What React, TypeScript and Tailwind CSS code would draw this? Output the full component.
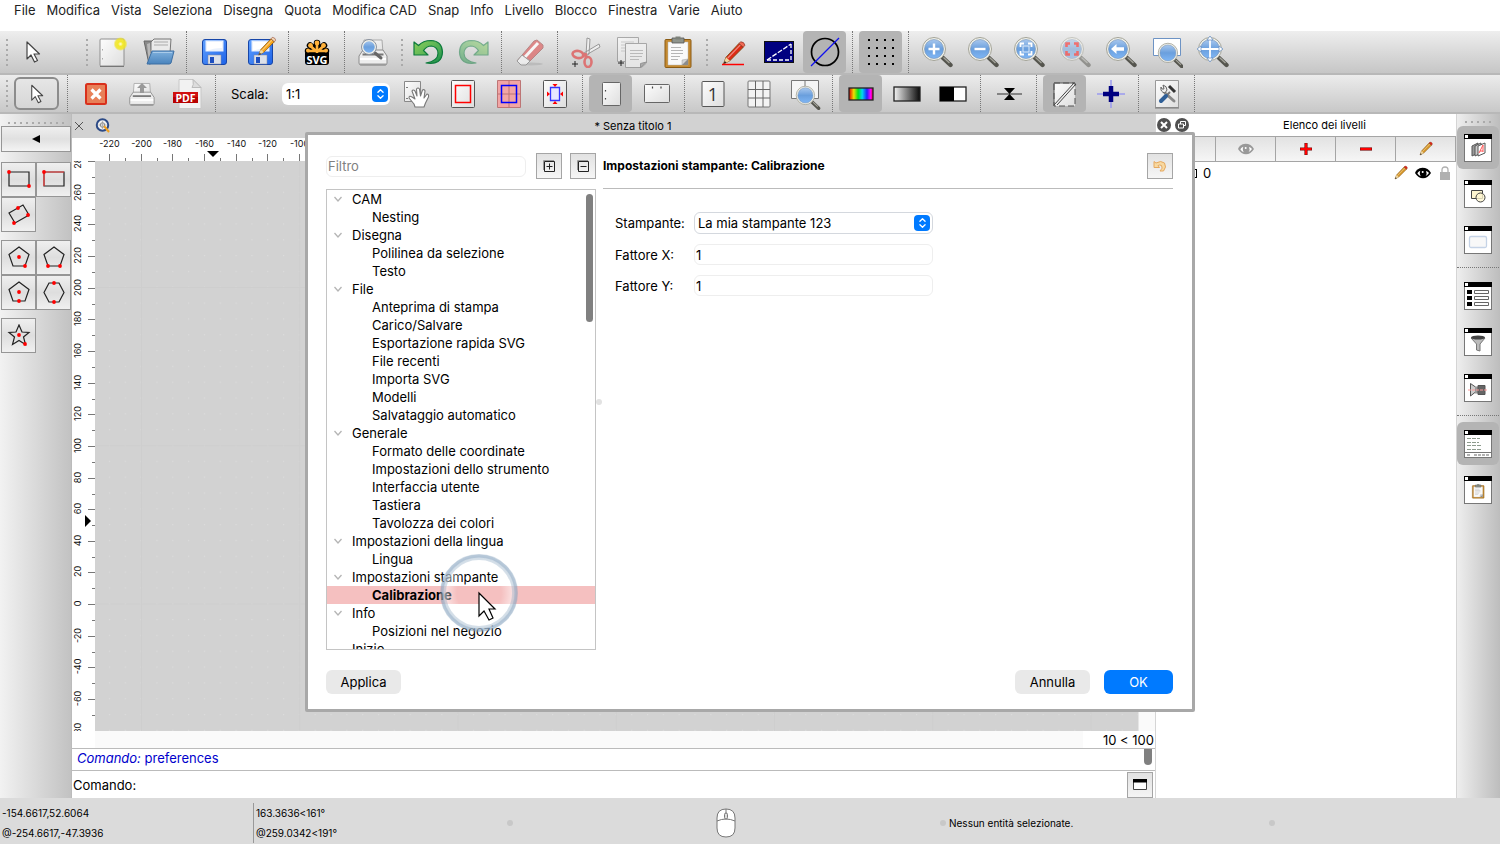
import React from 'react'
import type { ReactNode } from 'react'

const menus = ['File', 'Modifica', 'Vista', 'Seleziona', 'Disegna', 'Quota', 'Modifica CAD', 'Snap', 'Info', 'Livello', 'Blocco', 'Finestra', 'Varie', 'Aiuto']

const tree = [
  { name: 'CAM', items: ['Nesting'] },
  { name: 'Disegna', items: ['Polilinea da selezione', 'Testo'] },
  { name: 'File', items: ['Anteprima di stampa', 'Carico/Salvare', 'Esportazione rapida SVG', 'File recenti', 'Importa SVG', 'Modelli', 'Salvataggio automatico'] },
  { name: 'Generale', items: ['Formato delle coordinate', 'Impostazioni dello strumento', 'Interfaccia utente', 'Tastiera', 'Tavolozza dei colori'] },
  { name: 'Impostazioni della lingua', items: ['Lingua'] },
  { name: 'Impostazioni stampante', items: ['Calibrazione'] },
  { name: 'Info', items: ['Posizioni nel negozio'] },
  { name: 'Inizio', items: [] },
]

/* ---------- icons ---------- */

function Icon({ children, className = 'w-8 h-8', box = '0 0 32 32' }: { children: ReactNode; className?: string; box?: string }) {
  return (
    <svg viewBox={box} className={`${className} shrink-0`} fill="none" aria-hidden="true">
      {children}
    </svg>
  )
}

function Defs() {
  return (
    <svg width="0" height="0" className="absolute" aria-hidden="true">
      <defs>
        <linearGradient id="paper" x1="0" y1="0" x2="1" y2="1">
          <stop offset="0" stopColor="#fdfdfd" />
          <stop offset="1" stopColor="#dedede" />
        </linearGradient>
        <linearGradient id="lens" x1="0" y1="0" x2="0" y2="1">
          <stop offset="0" stopColor="#a9c8ee" />
          <stop offset="0.5" stopColor="#6a9fdd" />
          <stop offset="1" stopColor="#7fb6f5" />
        </linearGradient>
        <linearGradient id="floppy" x1="0" y1="0" x2="1" y2="1">
          <stop offset="0" stopColor="#5fa0ff" />
          <stop offset="1" stopColor="#1d63e8" />
        </linearGradient>
        <linearGradient id="folder" x1="0" y1="0" x2="0" y2="1">
          <stop offset="0" stopColor="#7fb0dd" />
          <stop offset="1" stopColor="#4a84bd" />
        </linearGradient>
        <linearGradient id="green" x1="0" y1="0" x2="1" y2="1">
          <stop offset="0" stopColor="#8ccf5a" />
          <stop offset="0.6" stopColor="#4fae55" />
          <stop offset="1" stopColor="#128a48" />
        </linearGradient>
        <linearGradient id="rainbow">
          <stop offset="0" stopColor="#e00000" />
          <stop offset="0.2" stopColor="#f0e000" />
          <stop offset="0.38" stopColor="#00e020" />
          <stop offset="0.55" stopColor="#00d8f0" />
          <stop offset="0.75" stopColor="#2020ff" />
          <stop offset="0.9" stopColor="#ff00ff" />
          <stop offset="1" stopColor="#f00040" />
        </linearGradient>
        <linearGradient id="mono">
          <stop offset="0" stopColor="#f4f4f4" />
          <stop offset="1" stopColor="#0a0a0a" />
        </linearGradient>
        <radialGradient id="glow">
          <stop offset="0" stopColor="#fffde0" />
          <stop offset="0.35" stopColor="#f4ea2a" />
          <stop offset="0.75" stopColor="#f0e420" stopOpacity="0.8" />
          <stop offset="1" stopColor="#f0e420" stopOpacity="0" />
        </radialGradient>
      </defs>
    </svg>
  )
}

const Arrow = () => (
  <path d="M10 6v17l4-4 3.500 7 3-1.500L17 18h5.500z" fill="#fff" stroke="#444" strokeWidth="1.200" strokeLinejoin="round" />
)

function Lens({ children, faded }: { children?: ReactNode; faded?: boolean }) {
  return (
    <g opacity={faded ? 0.5 : 1}>
      <path d="M21 21l8.500 8" stroke="#55554e" strokeWidth="4.400" strokeLinecap="round" />
      <path d="M22.500 21.500l6 5.600" stroke="#a5a59c" strokeWidth="1.300" />
      <circle cx="13" cy="13" r="11.500" fill="#f2f2ea" stroke="#a3a398" />
      <circle cx="13" cy="13" r="9.500" fill="url(#lens)" stroke="#7490b4" strokeWidth="0.600" />
      {children}
    </g>
  )
}

const Printer = () => (
  <>
    <path d="M7 4h18l1 13H6z" fill="url(#paper)" stroke="#aaa" />
    <path d="M6 14h20l4 6v7q0 2-2 2H4q-2 0-2-2v-7z" fill="#ededed" stroke="#8c8c8c" />
    <path d="M5.500 18.500h21" stroke="#777" strokeWidth="2" />
    <path d="M3 23h26" stroke="#fff" strokeWidth="2" />
    <path d="M3 28.500h26" stroke="#9b9b9b" strokeWidth="2" />
  </>
)

const Floppy = () => (
  <>
    <rect x="3.500" y="3.500" width="24" height="25" rx="2.500" fill="url(#floppy)" stroke="#1746a8" />
    <path d="M6.500 4.500h18v11h-18z" fill="#eaf1fc" />
    <path d="M8 6h15v6q-9 0-15 3z" fill="#fff" />
    <path d="M9 19h13v9H9z" fill="#dce1ea" stroke="#889" strokeWidth="0.500" />
    <path d="M11 21h4v6h-4z" fill="#1d4fc0" />
  </>
)

function Pencil({ wood = '#d99a2b', tip = '#e02818' }: { wood?: string; tip?: string }) {
  return (
    <g strokeLinejoin="round">
      <path d="M4 28l3-8L22 4l5 4.500L11.500 24z" fill={wood} stroke="#7a4a10" strokeWidth="1" />
      <path d="M22 4l2-2q4 0 5 4l-2 2.500z" fill={tip} stroke="#7a2010" strokeWidth="0.700" />
      <path d="M4 28l3-8 4.500 4z" fill="#efd7a2" />
      <path d="M4 28l1.500-3.500 2 1.800z" fill="#222" />
      <path d="M9 21L23.500 6" stroke="#fff" strokeOpacity="0.450" strokeWidth="1.500" />
    </g>
  )
}

const Clipboard = () => (
  <>
    <rect x="3" y="3.500" width="26" height="28" rx="1" fill="#c58a30" stroke="#8a5b14" />
    <path d="M6 6h20v23H6z" fill="#fafafa" stroke="#bbb" strokeWidth="0.500" />
    <path d="M10 2h12v5H10z" fill="#8f948c" stroke="#555" strokeWidth="0.800" />
    <path d="M13.500 0.500h5v3h-5z" fill="#7c8078" />
    <path d="M9 11.500h10M9 14.500h12M9 17.500h12M9 20.500h9M9 23.500h7" stroke="#b5b5b5" />
    <path d="M26 23l-6 6h6z" fill="#8c8c8c" />
    <path d="M20 29v-5l6-1z" fill="#d5d5d5" stroke="#888" strokeWidth="0.400" />
  </>
)

const Undo = () => (
  <path d="M2 6v13h14l-4.500-4.500q3-4.500 8-4.500 6.500 1 6.500 7.500 0 7.500-12 9.500 16 2.500 16.500-11Q30 5 19 4.500 11 4.500 6.500 9.500z" fill="url(#green)" stroke="#0d7a3c" strokeWidth="1.200" strokeLinejoin="round" />
)

const Page = () => <rect x="4.500" y="2.500" width="23" height="27" rx="1" fill="url(#paper)" stroke="#555" />

const Eye = ({ color }: { color: string }) => (
  <>
    <path d="M0 10q2-7 11-8 9 0 13 8-5 8-12 8T0 10z" fill={color} />
    <path d="M3.500 10.500Q5 7.500 8 6.500q-2 5 1 8.500-3.500-1-5.500-4.500zM16.500 7q3 1 4.500 3-2 3-5 4.500 2.500-3.500 0.500-7.500z" fill="#fff" />
    <circle cx="11.500" cy="8.500" r="1.500" fill="#fff" />
  </>
)

const Frame = ({ children }: { children: ReactNode }) => (
  <Icon className="w-7 h-7" box="0 0 28 28">
    <rect x="0.500" y="0.500" width="27" height="27" fill="#fff" stroke="#777" />
    <path d="M0 0h28v5H0z" fill="#000" />
    <path d="M1 1h3v3H1z" fill="#fff" />
    {children}
  </Icon>
)

/* ---------- toolbar parts ---------- */

function Tool({ label, active, children }: { label: string; active?: boolean; children: ReactNode }) {
  return (
    <button type="button" aria-label={label} className={`flex items-center justify-center w-[43px] h-full shrink-0 rounded ${active ? 'bg-[#b4b4b4]' : ''}`}>
      {children}
    </button>
  )
}

const Sep = () => (
  <div className="flex justify-center w-[7px] h-full shrink-0">
    <div className="h-full border-l border-dotted border-[#777]" />
  </div>
)

const Handle = ({ className = '' }: { className?: string }) => (
  <div className={`flex flex-col justify-center items-end gap-[3px] w-[6px] h-full shrink-0 ${className}`}>
    {[0, 1, 2, 3, 4, 5].map((i) => (
      <div key={i} className="w-[2px] h-[2px] bg-[#aaa]" />
    ))}
  </div>
)

const Chip = ({ className }: { className: string }) => (
  <span className={`absolute flex items-center justify-center rounded bg-[#007aff] pointer-events-none ${className}`}>
    <svg viewBox="0 0 10 14" className="w-[9px] h-[12px]" fill="none" stroke="#fff" strokeWidth="1.500" strokeLinecap="round" strokeLinejoin="round" aria-hidden="true">
      <path d="M2 5l3-3 3 3M2 9l3 3 3-3" />
    </svg>
  </span>
)

function MainToolbar() {
  return (
    <div className="flex items-center gap-[3px] h-11 pl-[2px] shrink-0 overflow-hidden bg-linear-to-b from-[#eeeeee] to-[#c6c6c6] border-b-2 border-[#b8b8b8]">
      <Handle />
      <Tool label="Seleziona"><Icon><Arrow /></Icon></Tool>
      <Handle className="ml-[25px]" />
      <Tool label="Nuovo">
        <Icon>
          <rect x="3" y="3" width="24" height="27" rx="1" fill="url(#paper)" stroke="#909090" />
          <path d="M3 30.500h24" stroke="#777" />
          <path d="M5.500 13v1.500M5.500 22v1.500" stroke="#aaa" />
          <circle cx="23.500" cy="8" r="7" fill="url(#glow)" />
        </Icon>
      </Tool>
      <Tool label="Apri">
        <Icon>
          <path d="M1 5h9l1 2v20l-5 1z" fill="#8a8a8a" stroke="#666" />
          <path d="M4 8l3-1 2 19-3 1z" fill="#b9b9b9" />
          <path d="M8 6l3-3h17l-1 14H8z" fill="#eaeaea" stroke="#777" />
          <path d="M11 6h14M11 9h14" stroke="#aaa" />
          <path d="M9 15h22l-3 12q-1 1-2 1H4z" fill="url(#folder)" stroke="#3c6ea3" strokeLinejoin="round" />
          <path d="M10 16.500h19" stroke="#a9cbea" />
        </Icon>
      </Tool>
      <Sep />
      <Tool label="Salva"><Icon><Floppy /></Icon></Tool>
      <Tool label="Salva con nome">
        <Icon>
          <Floppy />
          <g transform="translate(11 0) scale(0.680)"><Pencil wood="#f6a417" tip="#f3d9b5" /></g>
        </Icon>
      </Tool>
      <Sep />
      <Tool label="Esporta SVG">
        <Icon>
          <g stroke="#000" strokeWidth="6.500" strokeLinecap="round"><path d="M16 16V7M16 16L9 9.500M16 16l7-6.500M16 15H7M16 15h9" /></g>
          <g stroke="#ffb13b" strokeWidth="2.600" strokeLinecap="round"><path d="M16 16V7M16 16L9 9.500M16 16l7-6.500M16 15H7M16 15h9" /></g>
          <g fill="#ffb13b"><circle cx="16" cy="7" r="2.400" /><circle cx="9.500" cy="9.500" r="2.400" /><circle cx="22.500" cy="9.500" r="2.400" /><circle cx="7" cy="14.500" r="2" /><circle cx="25" cy="14.500" r="2" /></g>
          <path d="M4 17h24v9q0 3-3 3H7q-3 0-3-3z" fill="#000" />
          <text x="16" y="27.500" textAnchor="middle" fontFamily="Open Sans, sans-serif" fontSize="11" fontWeight="700" fill="#fff">SVG</text>
        </Icon>
      </Tool>
      <Sep />
      <Tool label="Anteprima di stampa">
        <Icon>
          <Printer />
          <path d="M18 17l6 5" stroke="#666" strokeWidth="3" strokeLinecap="round" />
          <circle cx="12" cy="11" r="6.500" fill="url(#lens)" stroke="#efefe8" strokeWidth="1.500" />
          <circle cx="12" cy="11" r="7.500" stroke="#8a93a0" />
        </Icon>
      </Tool>
      <Handle />
      <Tool label="Annulla"><Icon><Undo /></Icon></Tool>
      <Tool label="Ripeti"><Icon><g transform="translate(32 0) scale(-1 1)" opacity="0.500"><Undo /></g></Icon></Tool>
      <Sep />
      <Tool label="Elimina">
        <Icon>
          <ellipse cx="17" cy="28" rx="12" ry="1.500" fill="#bbb" />
          <g opacity="0.750" strokeLinejoin="round">
            <path d="M3 25L20 5l3-1 6 5v3L13 28H8z" fill="#dd6a6a" stroke="#aa6a6a" />
            <path d="M11 21L24 7" stroke="#fff" strokeWidth="3" />
            <path d="M3 25l5-6 8 6-4 4H7z" fill="#f5f5f5" stroke="#888" />
          </g>
        </Icon>
      </Tool>
      <Sep />
      <Tool label="Taglia">
        <Icon>
          <path d="M17 2l3 1-1 15-3 2zM29 8l1 3-14 8-2-2z" fill="#eee" stroke="#999" />
          <g stroke="#dc7474" strokeWidth="2.600">
            <ellipse cx="8" cy="18.500" rx="5.500" ry="3.500" transform="rotate(10 8 18.500)" />
            <ellipse cx="18" cy="26" rx="3.500" ry="5" />
            <path d="M12 20l5-2M15 17l1 5" />
          </g>
          <path d="M5 25v6M2 28h6" stroke="#222" />
        </Icon>
      </Tool>
      <Tool label="Copia">
        <Icon>
          <g opacity="0.650">
            <path d="M1.500 1.500h21v24h-21z" fill="url(#paper)" stroke="#888" />
            <path d="M5 6h13M5 9h13M5 12h10M5 15h5" stroke="#bbb" />
            <path d="M9.500 7.500h21V27l-5 4.500h-16z" fill="#f4f4f4" stroke="#888" />
            <path d="M14 14.500h13M14 17.500h13M14 20.500h12M14 23.500h9" stroke="#aaa" />
            <path d="M30.500 26l-6 5.500v-4z" fill="#999" stroke="#777" />
          </g>
          <path d="M5 24v6M2 27h6" stroke="#222" />
        </Icon>
      </Tool>
      <Tool label="Incolla"><Icon><Clipboard /></Icon></Tool>
      <Handle />
      <Tool label="Penna">
        <Icon>
          <g transform="translate(3 4) scale(0.860)"><Pencil wood="#dd2a14" tip="#f06a55" /></g>
          <path d="M5 28.500h22" stroke="#f00" strokeWidth="1.500" />
        </Icon>
      </Tool>
      <Tool label="Misura">
        <Icon>
          <rect x="1.500" y="5.500" width="29" height="21" fill="#000080" stroke="#111" />
          <path d="M4 24L28 8" stroke="#fff" strokeWidth="1.300" strokeDasharray="5 1.500" />
          <path d="M28 8v16H4" stroke="#fff" strokeWidth="1.300" strokeDasharray="4 2" />
        </Icon>
      </Tool>
      <Tool label="Modalità bozza" active>
        <Icon>
          <circle cx="16" cy="16" r="13.500" stroke="#000" strokeWidth="1.700" />
          <path d="M2 30L30 2" stroke="#1010f0" strokeWidth="1.300" />
        </Icon>
      </Tool>
      <Sep />
      <Tool label="Griglia" active>
        <Icon>
          {[4, 12, 20, 28].map((y) => <path key={y} d={`M3 ${y}h2M11 ${y}h2M19 ${y}h2M27 ${y}h2`} stroke="#000" strokeWidth="2" />)}
        </Icon>
      </Tool>
      <Sep />
      <Tool label="Zoom avanti"><Icon><Lens><path d="M13 7.500v11M7.500 13h11" stroke="#fff" strokeWidth="2.400" /></Lens></Icon></Tool>
      <Tool label="Zoom indietro"><Icon><Lens><path d="M7.500 13h11" stroke="#fff" strokeWidth="2.400" /></Lens></Icon></Tool>
      <Tool label="Zoom automatico"><Icon><Lens><path d="M7.500 11V7.500H11M15 7.500h3.500V11M18.500 15v3.500H15M11 18.500H7.500V15" stroke="#fff" strokeWidth="1.800" /><rect x="10" y="10" width="6" height="6" stroke="#dceafa" /></Lens></Icon></Tool>
      <Tool label="Zoom selezione"><Icon><Lens faded><path d="M7.500 11V7.500H11M15 7.500h3.500V11M18.500 15v3.500H15M11 18.500H7.500V15" stroke="#f00" strokeWidth="2.600" /></Lens></Icon></Tool>
      <Tool label="Zoom precedente"><Icon><Lens><path d="M6 13l5.500-5v3.200H19v3.600h-7.500V18z" fill="#fff" /></Lens></Icon></Tool>
      <Tool label="Zoom finestra">
        <Icon>
          <path d="M2.500 2.500h27v17h-27z" fill="#fff" stroke="#6d93c4" />
          <g transform="translate(6 6) scale(0.840)"><Lens /></g>
        </Icon>
      </Tool>
      <Tool label="Sposta vista">
        <Icon>
          <Lens>
            <path d="M13 2v22M2 13h22" stroke="#fff" strokeWidth="1.800" />
            <path d="M13 0l3 4h-6zM13 26l3-4h-6zM0 13l4-3v6zM26 13l-4-3v6z" fill="#fff" stroke="#6d93c4" strokeWidth="0.800" />
          </Lens>
        </Icon>
      </Tool>
    </div>
  )
}

function PrintToolbar() {
  return (
    <div className="flex items-center gap-[3px] h-[39px] pl-[2px] shrink-0 overflow-hidden bg-linear-to-b from-[#ececec] to-[#c8c8c8] border-b-2 border-[#b8b8b8]">
      <Handle />
      <button type="button" aria-label="Seleziona" className="flex items-center justify-center w-[45px] h-[33px] ml-[3px] mr-[2px] shrink-0 rounded-md border-2 border-[#8c8c8c] bg-linear-to-b from-[#e6e6e6] to-[#d6d6d6]">
        <Icon className="w-7 h-7"><Arrow /></Icon>
      </button>
      <Sep />
      <Tool label="Chiudi">
        <Icon>
          <rect x="6" y="6" width="20" height="20" rx="1.500" fill="#e88058" stroke="#d9301c" strokeWidth="2" />
          <path d="M11.500 11.500l9 9M20.500 11.500l-9 9" stroke="#fff" strokeWidth="3.200" />
        </Icon>
      </Tool>
      <Tool label="Stampa">
        <Icon>
          <g transform="translate(2 2) scale(0.870)"><Printer /></g>
          <path d="M16 5l5 5h-3v5h-4v-5h-3z" fill="#999" />
        </Icon>
      </Tool>
      <Tool label="Esporta PDF">
        <Icon>
          <path d="M7 1.500h14l8 8v21H7z" fill="#f2f2f2" stroke="#c8c8c8" />
          <path d="M21 1.500q1 6-1 8h9z" fill="#ddd" stroke="#bbb" />
          <path d="M1 14h25v11H1z" fill="#b80000" />
          <path d="M1 14h25v5H1z" fill="#d01010" />
          <text x="13.500" y="23.500" textAnchor="middle" fontFamily="Open Sans, sans-serif" fontSize="10.500" fontWeight="700" fill="#fff">PDF</text>
        </Icon>
      </Tool>
      <Sep />
      <label htmlFor="scale" className="ml-[9px] w-[48px] shrink-0">Scala:</label>
      <div className="relative w-[108px] mr-[2px] shrink-0">
        <select id="scale" className="block w-full h-[22px] pl-1 rounded-md bg-white appearance-none outline-none">
          <option>1:1</option>
        </select>
        <Chip className="right-[2px] top-[3px] w-4 h-4" />
      </div>
      <Tool label="Sposta pagina">
        <Icon>
          <path d="M3.500 3.500h16v20h-16z" fill="url(#paper)" stroke="#888" />
          <path d="M6 9v1M6 20v1" stroke="#555" strokeWidth="1.500" />
          <path d="M14 29l-1-3-5-6q0-3 3-1l3 2-3-8q1-2 3 0l2 5-0.500-7q1.500-2 3 0l1 7 2-6q2-1 2.500 1l-1 7 3-4q2 0 1.500 3l-3 6-1.500 4z" fill="#fff" stroke="#777" strokeWidth="1.100" strokeLinejoin="round" />
        </Icon>
      </Tool>
      <Tool label="Bordi pagina"><Icon><Page /><path d="M8.500 7.500h15v17h-15z" stroke="#f00" strokeWidth="1.500" /></Icon></Tool>
      <Tool label="Pagine multiple">
        <Icon>
          <path d="M4.500 2.500h23v27h-23z" fill="#f2a5a5" stroke="#bd7575" />
          <path d="M16 2v28M4 16h24" stroke="#bd7575" />
          <path d="M8.500 7.500h15v17h-15z" stroke="#00f" strokeWidth="1.500" />
        </Icon>
      </Tool>
      <Tool label="Adatta alla pagina">
        <Icon>
          <Page />
          <path d="M11.500 9.500h9v13h-9z" fill="#e6e6ff" stroke="#33f" strokeWidth="1.300" />
          <path d="M16 9l-2.500-3h5zM16 23l-2.500 3h5zM11 16l-3-2.500v5zM21 16l3-2.500v5z" fill="#f00" />
        </Icon>
      </Tool>
      <Sep />
      <Tool label="Verticale" active>
        <Icon><rect x="7.500" y="4.500" width="18" height="23" rx="1" fill="url(#paper)" stroke="#666" /><path d="M10.500 12v1.500M10.500 20v1.500" stroke="#444" strokeWidth="1.200" /></Icon>
      </Tool>
      <Tool label="Orizzontale">
        <Icon><rect x="3.500" y="6.500" width="25" height="18" rx="1" fill="url(#paper)" stroke="#666" /><path d="M11.500 8.500v2M20 8.500v2" stroke="#444" strokeWidth="1.200" /></Icon>
      </Tool>
      <Sep />
      <Tool label="Pagina singola">
        <Icon>
          <rect x="5" y="3.500" width="22" height="25" rx="1" fill="url(#paper)" stroke="#555" />
          <text x="16" y="23" textAnchor="middle" fontFamily="Open Sans, sans-serif" fontSize="18" fill="#333">1</text>
        </Icon>
      </Tool>
      <Tool label="Più pagine">
        <Icon>
          <rect x="5" y="3" width="22" height="26" rx="1" fill="#f3f3f3" stroke="#777" />
          <path d="M12.500 3v26M20 3v26M5 11.500h22M5 20h22" stroke="#666" />
        </Icon>
      </Tool>
      <Tool label="Zoom pagina">
        <Icon>
          <path d="M2.500 2.500h27v18h-27zM16 2v18" fill="#f5f5f5" stroke="#777" />
          <g transform="translate(6 7) scale(0.800)"><Lens /></g>
        </Icon>
      </Tool>
      <Sep />
      <Tool label="Colore" active><Icon><rect x="4" y="10" width="24" height="12" fill="url(#rainbow)" stroke="#222" strokeWidth="1.300" /></Icon></Tool>
      <Tool label="Scala di grigi"><Icon><rect x="3" y="9" width="26" height="14" fill="url(#mono)" stroke="#222" strokeWidth="1.300" /></Icon></Tool>
      <Tool label="Bianco e nero"><Icon><rect x="3" y="9" width="26" height="14" fill="#fff" stroke="#222" strokeWidth="1.300" /><path d="M3 9h14v14H3z" fill="#000" /></Icon></Tool>
      <Sep />
      <Tool label="Spessore linea"><Icon><path d="M4 16h25" stroke="#666" strokeWidth="1.500" /><path d="M11 10h11l-5.500 6zM11 22h11l-5.500-6z" fill="#000" /></Icon></Tool>
      <Sep />
      <Tool label="Linee tratteggiate" active>
        <Icon>
          <rect x="5" y="5" width="21" height="23" fill="url(#paper)" stroke="#555" strokeDasharray="6 3" />
          <path d="M26 5H5v23" stroke="#555" />
          <path d="M5 27L25 5M8 27L27 6" stroke="#444" />
        </Icon>
      </Tool>
      <Tool label="Origine"><Icon><path d="M16 2v28M2 16h28" stroke="#9a9af0" strokeWidth="1.500" /><path d="M16 8v16M8 16h16" stroke="#000080" strokeWidth="4.500" /></Icon></Tool>
      <Sep />
      <Tool label="Preferenze">
        <Icon>
          <path d="M4.500 2.500h23v27h-23z" fill="url(#paper)" stroke="#999" />
          <path d="M4 30h24" stroke="#777" />
          <path d="M14 15l9 8" stroke="#888" strokeWidth="3" strokeLinecap="round" />
          <path d="M19 14l-4 4" stroke="#777" strokeWidth="2" />
          <path d="M15 18l-5 5" stroke="#2f5f97" strokeWidth="4" strokeLinecap="round" />
          <path d="M18 8l6 6" stroke="#333" strokeWidth="3" />
          <path d="M10 9q-1 5 4 6l2-3q0-4-4-5l1 4-2 0z" fill="#eee" stroke="#666" />
        </Icon>
      </Tool>
      <Sep />
    </div>
  )
}

/* ---------- left palette ---------- */

const Dots = ({ at }: { at: number[][] }) => <>{at.map(([x, y]) => <circle key={`${x}-${y}`} cx={x} cy={y} r="1.900" fill="#f00" />)}</>

function Shape({ label, d, at, red }: { label: string; d: string; at: number[][]; red?: string }) {
  return (
    <button type="button" aria-label={label} className="flex items-center justify-center w-[35px] h-[35px] border border-[#969696] bg-linear-to-b from-[#efefef] via-[#dedede] to-[#f0f0f0]">
      <Icon className="w-6 h-6" box="0 0 24 24">
        <path d={d} stroke="#222" strokeWidth="1.200" />
        {red && <path d={red} stroke="#f44" strokeWidth="1.200" />}
        <Dots at={at} />
      </Icon>
    </button>
  )
}

const pentagon = 'M12 1l10 7.500-4 11.500H6L2 8.500z'

function LeftPalette() {
  return (
    <div className="flex flex-col w-[72px] shrink-0 pl-px pt-2 bg-linear-to-r from-[#f2f2f2] to-[#c2c2c2] border-r border-[#bbb]">
      <div className="flex justify-center gap-1 h-1 shrink-0">
        {[0, 1, 2, 3, 4, 5, 6, 7, 8, 9].map((i) => <div key={i} className="w-[2px] h-[2px] bg-[#aaa]" />)}
      </div>
      <button type="button" aria-label="Indietro" className="flex items-center justify-center h-[26px] mb-[10px] shrink-0 border border-[#969696] bg-linear-to-b from-[#efefef] via-[#e0e0e0] to-[#f4f4f4]">
        <svg viewBox="0 0 8 8" className="w-2 h-2" aria-hidden="true"><path d="M0 4l8-4v8z" /></svg>
      </button>
      <div className="flex flex-wrap shrink-0">
        <Shape label="Rettangolo" d="M2 4h20v14H2z" at={[[2, 4], [22, 18]]} />
        <Shape label="Rettangolo con dimensioni" d="M2 4h20v14H2z" red="M2 18V4h20" at={[[2, 4]]} />
        <Shape label="Rettangolo 3 punti" d="M2 10L16 2l6 10L8 20z" at={[[11, 5], [21, 12], [7, 20]]} />
      </div>
      <div className="flex flex-wrap shrink-0 mt-2">
        <Shape label="Poligono centro e angolo" d={pentagon} at={[[12, 11], [18, 20]]} />
        <Shape label="Poligono due angoli" d={pentagon} at={[[6, 20], [18, 20]]} />
        <Shape label="Poligono centro e lato" d={pentagon} at={[[12, 11], [12, 20]]} />
        <Shape label="Poligono lato lato" d="M7 2h10l5 9.500-5 9.500H7L2 11.500z" at={[[12, 2], [12, 21]]} />
      </div>
      <div className="flex flex-wrap shrink-0 mt-2">
        <Shape label="Stella" d="M12 1l3 7 7 .500-5.500 4.500 2 7.500-6.500-4-6.500 4 2-7.500L2 8.500 9 8z" at={[[12, 11], [18, 20]]} />
      </div>
    </div>
  )
}

/* ---------- drawing area ---------- */

const hTicks = Array.from({ length: 33 }, (_, i) => -220 + i * 20)
const vTicks = Array.from({ length: 19 }, (_, i) => 280 - i * 20)
const UNIT = 1.5825

function DrawingArea() {
  return (
    <div className="flex flex-col flex-1 min-h-0">
      <div className="h-[23px] shrink-0 overflow-hidden bg-white">
        <svg className="w-full h-full" fontFamily="Inter, sans-serif" fontSize="9" fill="#111" aria-hidden="true">
          {hTicks.map((v) => {
            const x = Math.round(38 + (v + 220) * UNIT) - 0.5
            return (
              <g key={v}>
                <text x={x} y="9" textAnchor="middle">{v}</text>
                <path d={`M${x} 16v7M${x + 16} 20v3`} stroke="#777" />
              </g>
            )
          })}
          <path d="M135 13h12l-6 6z" fill="#000" />
        </svg>
      </div>
      <div className="flex flex-1 min-h-0">
        <div className="w-[23px] shrink-0 overflow-hidden bg-white">
          <svg className="w-full h-[570px]" fontFamily="Inter, sans-serif" fontSize="9" fill="#111" aria-hidden="true">
            {vTicks.map((v) => {
              const y = Math.round((280 - v) * UNIT) + 0.5
              return (
                <g key={v}>
                  <text textAnchor="middle" transform={`translate(9 ${y - 1}) rotate(-90)`}>{v}</text>
                  <path d={`M16 ${y}h7M20 ${y + 16}h3`} stroke="#777" />
                </g>
              )
            })}
            <path d="M13 354v12l6-6z" fill="#000" />
          </svg>
        </div>
        <div className="flex-1 min-w-0 bg-[#d2d2d2]">
          <svg className="w-full h-full" aria-hidden="true">
            <defs>
              <pattern id="grid" x="6" y="7" width="15.825" height="15.825" patternUnits="userSpaceOnUse">
                <rect x="8" y="8" width="1" height="1" fill="#dfdfdf" />
              </pattern>
              <pattern id="meta" x="46" y="126" width="158.250" height="158.250" patternUnits="userSpaceOnUse">
                <path d="M0.500 0v159M0 0.500h159" stroke="#cecece" />
              </pattern>
            </defs>
            <rect width="100%" height="100%" fill="url(#grid)" />
            <rect width="100%" height="100%" fill="url(#meta)" />
          </svg>
        </div>
        <div className="w-[17px] shrink-0 bg-[#fafafa] border-l border-[#e6e6e6]" />
      </div>
      <div className="flex h-[17px] shrink-0">
        <div className="w-[23px] bg-white" />
        <div className="flex-1 bg-[#fafafa]" />
        <div className="w-[72px] pr-px bg-white text-right leading-[19px] whitespace-nowrap">10 &lt; 100</div>
      </div>
    </div>
  )
}

function Center() {
  return (
    <main className="flex flex-col flex-1 min-w-0 bg-white">
      <div className="flex items-center h-6 shrink-0 bg-[#d2d2d2] text-[11px]">
        <button type="button" aria-label="Chiudi scheda" className="w-[14px] flex justify-center">
          <svg viewBox="0 0 10 10" className="w-[10px] h-[10px]" stroke="#555" aria-hidden="true"><path d="M1 1l8 8M9 1L1 9" /></svg>
        </button>
        <Icon className="w-4 h-4 ml-[9px]">
          <circle cx="15" cy="14" r="11.500" fill="#f0f0f0" stroke="#2c4a86" strokeWidth="4" />
          <circle cx="15" cy="14" r="4.500" stroke="#666" strokeWidth="1.500" />
          <path d="M15 6v16M7 14h16" stroke="#888" />
          <path d="M18 16l10 12" stroke="#f0a020" strokeWidth="4" />
        </Icon>
        <span className="flex-1 text-center">* Senza titolo 1</span>
      </div>
      <DrawingArea />
      <div className="flex justify-between h-[23px] shrink-0 pl-[5px] pr-[3px] border-y border-[#bbb] text-[#0000cc]">
        <p className="leading-[18px]"><i>Comando:</i> preferences</p>
        <div className="w-2 h-4 rounded-b-full bg-[#808080]" />
      </div>
      <div className="flex items-center h-[27px] shrink-0 pr-[2px]">
        <label htmlFor="command" className="pl-px">Comando:</label>
        <input id="command" className="flex-1 min-w-0 h-5 px-1 outline-none" />
        <button type="button" aria-label="Finestra comandi" className="flex items-center justify-center w-[26px] h-[26px] border border-[#a5a5a5] bg-linear-to-b from-[#e2e2e2] to-[#f4f4f4]">
          <svg viewBox="0 0 14 11" className="w-[14px] h-[11px]" aria-hidden="true">
            <path d="M0.500 0.500h13v10h-13z" fill="#fff" stroke="#444" />
            <path d="M0 0h14v3.500H0z" />
          </svg>
        </button>
      </div>
    </main>
  )
}

/* ---------- layer list ---------- */

const layerButton = 'flex flex-1 items-center justify-center border border-l-0 border-[#a5a5a5] bg-linear-to-b from-[#e2e2e2] to-[#f6f6f6]'

function Layers() {
  return (
    <aside className="flex flex-col w-[301px] shrink-0 bg-white border-l border-[#d5d5d5]">
      <div className="flex items-center h-[22px] shrink-0 gap-1 pl-px text-[11px]">
        <button type="button" aria-label="Chiudi pannello">
          <svg viewBox="0 0 14 14" className="w-[14px] h-[14px]" fill="none" aria-hidden="true"><circle cx="7" cy="7" r="7" fill="#505050" /><path d="M4 4l6 6M10 4l-6 6" stroke="#fff" strokeWidth="2" /></svg>
        </button>
        <button type="button" aria-label="Sgancia pannello">
          <svg viewBox="0 0 14 14" className="w-[14px] h-[14px]" fill="none" aria-hidden="true"><circle cx="7" cy="7" r="7" fill="#505050" /><path d="M5.500 6V3.500h5v4H9M3.500 6h5v4h-5z" stroke="#fff" /></svg>
        </button>
        <h2 className="flex-1 text-center">Elenco dei livelli</h2>
      </div>
      <div className="flex h-[26px] shrink-0">
        <button type="button" aria-label="Mostra tutti i livelli" className={layerButton} />
        <button type="button" aria-label="Nascondi tutti i livelli" className={layerButton}>
          <Icon className="w-4 h-4" box="0 0 24 20"><Eye color="#999" /></Icon>
        </button>
        <button type="button" aria-label="Aggiungi livello" className={layerButton}>
          <Icon className="w-3 h-3" box="0 0 12 12"><path d="M6 0v12M0 6h12" stroke="#711" strokeWidth="3.200" /><path d="M6 0.600v10.800M0.600 6h10.800" stroke="#f00" strokeWidth="2" /></Icon>
        </button>
        <button type="button" aria-label="Rimuovi livello" className={layerButton}>
          <Icon className="w-3 h-3" box="0 0 12 12"><path d="M0 6h12" stroke="#711" strokeWidth="3.200" /><path d="M0.600 6h10.800" stroke="#f00" strokeWidth="2" /></Icon>
        </button>
        <button type="button" aria-label="Modifica livello" className={layerButton}>
          <Icon className="w-4 h-4"><Pencil /></Icon>
        </button>
      </div>
      <div className="flex items-center h-[22px] pl-8 pr-[6px]">
        <span className="w-[9px] h-[9px] border border-black" />
        <span className="flex-1 pl-[6px]">0</span>
        <Icon className="w-4 h-4"><Pencil /></Icon>
        <Icon className="w-4 h-4 ml-[6px]" box="0 0 24 20"><Eye color="#000" /></Icon>
        <svg viewBox="0 0 10 14" className="w-[10px] h-[14px] ml-[9px]" fill="none" aria-hidden="true"><path d="M2 7V4q0-3 3-3t3 3v3" stroke="#b0b0b0" strokeWidth="1.300" /><path d="M0 6h10v8H0z" fill="#b0b0b0" /></svg>
      </div>
    </aside>
  )
}

/* ---------- right dock buttons ---------- */

function Dock({ label, active, children }: { label: string; active?: boolean; children: ReactNode }) {
  return (
    <button type="button" aria-label={label} className={`flex items-center justify-center h-[43px] shrink-0 rounded-md ${active ? 'bg-[#b4b4b4]' : ''}`}>
      <Frame>{children}</Frame>
    </button>
  )
}

const DockSep = () => <div className="h-[7px] py-[3px] shrink-0"><div className="border-t border-dotted border-[#777]" /></div>

function RightDock() {
  return (
    <div className="flex flex-col gap-[3px] w-11 shrink-0 pt-[7px] pr-px bg-linear-to-r from-[#eeeeee] to-[#bdbdbd] border-l border-[#d5d5d5]">
      <div className="flex justify-center gap-1 h-[2px] shrink-0">
        {[0, 1, 2, 3, 4].map((i) => <div key={i} className="w-[2px] h-[2px] bg-[#aaa]" />)}
      </div>
      <Dock label="Elenco dei livelli" active>
        <path d="M8 12l6-3v10l-6 3z" fill="#999" stroke="#555" />
        <path d="M11 12l6-3v10l-6 3z" fill="#ccc" stroke="#555" />
        <path d="M14 12l7-3v10l-7 3z" fill="#fff" stroke="#555" />
        <path d="M15 19l4-8v7M16 17h3" stroke="#f55" />
      </Dock>
      <Dock label="Elenco dei blocchi">
        <path d="M7.500 10.500h11v8h-11z" fill="#fdf5cf" stroke="#444" />
        <circle cx="16.500" cy="17.500" r="4.500" fill="#fdf5cf" fillOpacity="0.800" stroke="#444" />
      </Dock>
      <Dock label="Elenco delle viste">
        <rect x="5.500" y="10.500" width="17" height="11" rx="1.500" fill="#f8f8f8" stroke="#c5d3e6" strokeWidth="1.300" />
      </Dock>
      <DockSep />
      <Dock label="Editor proprietà">
        <path d="M3 8h5v4H3zM3 14h5v4H3zM3 20h5v4H3z" fill="#000" />
        <path d="M10.500 8.500h14v3h-14zM10.500 14.500h14v3h-14zM10.500 20.500h14v3h-14z" stroke="#666" />
      </Dock>
      <Dock label="Filtro di selezione">
        <path d="M7 10l5.500 6v6l3.500 1v-7l5-6z" fill="#bbb" stroke="#777" />
        <ellipse cx="14" cy="9.500" rx="7" ry="2" fill="#444" />
      </Dock>
      <Dock label="Browser libreria">
        <path d="M6.500 9.500l5 3.500v5l-5 4z" fill="#ccc" stroke="#555" />
        <path d="M11 12.500h4v7h-4z" fill="#999" />
        <path d="M14 11.500h7v9h-7z" fill="#666" stroke="#555" />
        <path d="M4 16h20" stroke="#f99" strokeDasharray="3 1" />
      </Dock>
      <DockSep />
      <Dock label="Riga di comando" active>
        <path d="M3 8.500h13M3 12.500h12M3 15.500h14M3 19.500h15" stroke="#8d9b8d" strokeDasharray="4 1" />
        <path d="M1 22.500h26" stroke="#777" />
        <path d="M3 25h3M10 25h15" stroke="#666" strokeDasharray="3 1" />
      </Dock>
      <Dock label="Appunti"><g transform="translate(7 8) scale(0.450)"><Clipboard /></g></Dock>
    </div>
  )
}

/* ---------- preferences dialog ---------- */

const squareButton = 'flex items-center justify-center w-[26px] h-[26px] shrink-0 border border-[#a5a5a5] bg-linear-to-b from-[#e2e2e2] to-[#f6f6f6]'
const field = 'block w-full h-[21px] px-[4px] rounded-md border border-[#eeeeee] bg-white outline-none'

function PreferenceTree() {
  return (
    <div className="relative flex-1 min-h-0 overflow-hidden border border-[#c4c4c4]">
      <ul>
        {tree.map((group) => (
          <li key={group.name}>
            <div className="flex items-center h-[18px] pl-[6px]">
              <svg viewBox="0 0 10 8" className={`w-[10px] h-2 mr-[9px] ${group.items.length ? '' : 'invisible'}`} fill="none" stroke="#b5b5b5" strokeWidth="1.300" aria-hidden="true"><path d="M1.500 2L5 6l3.500-4" /></svg>
              <span>{group.name}</span>
            </div>
            <ul>
              {group.items.map((item) => (
                <li key={item} className={`h-[18px] pl-[45px] leading-[18px] ${item === 'Calibrazione' ? 'bg-[#f5c0c0] font-bold' : ''}`}>{item}</li>
              ))}
            </ul>
          </li>
        ))}
      </ul>
      <div className="absolute right-[2px] top-1 w-[7px] h-[128px] rounded-full bg-[#808080]" />
      {/* pointer highlight */}
      <svg viewBox="0 0 80 80" className="absolute left-[112px] top-[363px] w-20 h-20" fill="none" aria-hidden="true">
        <defs>
          <radialGradient id="halo">
            <stop offset="0.600" stopColor="#fff" stopOpacity="0" />
            <stop offset="0.900" stopColor="#fff" stopOpacity="0.500" />
            <stop offset="1" stopColor="#dde6ee" stopOpacity="0.500" />
          </radialGradient>
        </defs>
        <circle cx="40" cy="40" r="37" fill="url(#halo)" />
        <circle cx="40" cy="40" r="36" stroke="#8aa6c0" strokeOpacity="0.350" strokeWidth="6" />
        <circle cx="40" cy="40" r="37" stroke="#8aa6c0" strokeOpacity="0.400" strokeWidth="3" />
        <path d="M40 40v23l5-5 5 9 4-2-4-9h6z" fill="#fff" stroke="#000" strokeWidth="1.200" />
      </svg>
    </div>
  )
}

function Preferences() {
  return (
    <div role="dialog" aria-label="Preferenze" className="absolute inset-x-[305px] inset-y-[132px] flex flex-col p-[18px] pr-[19px] pb-[15px] bg-white border-3 border-[#a8a8a8] rounded-xs">
      <div className="flex flex-1 min-h-0">
        <div className="flex flex-col w-[270px] shrink-0">
          <div className="flex items-center mb-[10px]">
            <input aria-label="Filtro" placeholder="Filtro" className="flex-1 min-w-0 h-[21px] pl-px rounded-md border border-[#eeeeee] outline-none placeholder:text-[#808080]" />
            <button type="button" aria-label="Espandi tutto" className={`${squareButton} ml-[10px]`}>
              <Icon className="w-[14px] h-[14px]" box="0 0 14 14"><path d="M1.500 11V1.500H12" stroke="#999" /><path d="M2.500 2.500h10v10h-10zM7.500 4.500v6M4.500 7.500h6" stroke="#222" /></Icon>
            </button>
            <button type="button" aria-label="Comprimi tutto" className={`${squareButton} ml-2`}>
              <Icon className="w-[14px] h-[14px]" box="0 0 14 14"><path d="M1.500 11V1.500H12" stroke="#999" /><path d="M2.500 2.500h10v10h-10zM4.500 7.500h6" stroke="#222" /></Icon>
            </button>
          </div>
          <PreferenceTree />
        </div>
        <div className="flex items-center w-[7px] shrink-0"><div className="w-[6px] h-[6px] rounded-full bg-[#e2e2e2]" /></div>
        <div className="flex-1 min-w-0">
          <div className="flex items-center justify-between h-9 pb-[10px] border-b border-[#bbb]">
            <h1 className="font-bold text-[12px]">Impostazioni stampante: Calibrazione</h1>
            <button type="button" aria-label="Ripristina" className={squareButton}>
              <svg viewBox="0 0 14 12" className="w-[14px] h-3" aria-hidden="true"><path d="M1 1.500l2 1.500q5-3 8.500 0 2.500 4-1 8H7q3.500-3 1.500-5.500-2-1-3.500 0l1.500 2H1z" fill="#f8d9a0" stroke="#e5a860" /></svg>
            </button>
          </div>
          <div className="grid grid-cols-[79px_239px] items-center gap-y-[10px] pt-[23px] pl-3">
            <label htmlFor="printer">Stampante:</label>
            <div className="relative">
              <select id="printer" className="block w-full h-[22px] pl-[3px] rounded-md border border-[#d4d8de] bg-white appearance-none outline-none">
                <option>La mia stampante 123</option>
              </select>
              <Chip className="right-[3px] top-[3px] w-4 h-4" />
            </div>
            <label htmlFor="fx">Fattore X:</label>
            <input id="fx" defaultValue="1" className={`${field} pl-px`} />
            <label htmlFor="fy">Fattore Y:</label>
            <input id="fy" defaultValue="1" className={`${field} pl-px`} />
          </div>
        </div>
      </div>
      <div className="flex mt-5 shrink-0">
        <button type="button" className="w-[75px] h-6 rounded-md bg-[#e9e9e9]">Applica</button>
        <button type="button" className="w-[75px] h-6 ml-auto rounded-md bg-[#e9e9e9]">Annulla</button>
        <button type="button" className="w-[69px] h-6 ml-[14px] rounded-md bg-[#007aff] text-white">OK</button>
      </div>
    </div>
  )
}

function StatusBar() {
  return (
    <footer className="flex items-center h-[46px] pt-[3px] shrink-0 bg-[#dbdbdb] text-[10px] leading-5">
      <div className="w-[253px] pl-[2px]"><p>-154.6617,52.6064</p><p>@-254.6617,-47.3936</p></div>
      <div className="w-[254px] pl-[2px] border-l border-[#999]"><p>163.3636&lt;161°</p><p>@259.0342&lt;191°</p></div>
      <div className="w-[6px] h-[6px] rounded-full bg-[#c8c8c8]" />
      <svg viewBox="0 0 20 32" className="w-5 h-8 ml-[203px]" aria-hidden="true">
        <path d="M1 11Q1 2 10 2t9 9v10q0 9-9 9t-9-9z" fill="#fff" stroke="#777" />
        <path d="M1 14q9-4 18 0M10 2v5" stroke="#777" fill="none" />
        <rect x="8.500" y="6" width="3" height="6" rx="1.500" fill="#ddd" stroke="#777" />
      </svg>
      <div className="w-[6px] h-[6px] ml-auto rounded-full bg-[#c8c8c8]" />
      <p className="w-[323px] pl-[3px]">Nessun entità selezionate.</p>
      <div className="w-[6px] h-[6px] mr-[225px] rounded-full bg-[#c8c8c8]" />
    </footer>
  )
}

export default function App() {
  return (
    <div className="relative flex flex-col h-screen overflow-hidden bg-white text-black text-[13px] leading-4 font-['Inter',sans-serif]">
      <Defs />
      <nav className="flex gap-[11px] h-[31px] pl-[14px] pt-[2px] shrink-0 text-[#222]">
        {menus.map((m) => <button type="button" key={m} className="h-4 whitespace-nowrap">{m}</button>)}
      </nav>
      <MainToolbar />
      <PrintToolbar />
      <div className="flex flex-1 min-h-0">
        <LeftPalette />
        <Center />
        <Layers />
        <RightDock />
      </div>
      <StatusBar />
      <Preferences />
    </div>
  )
}
